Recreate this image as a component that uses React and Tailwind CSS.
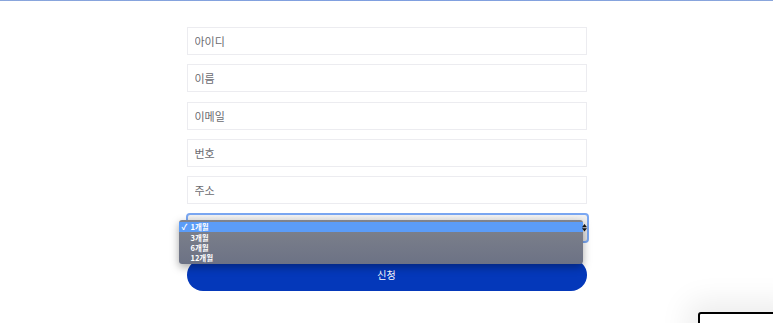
import React from 'react'

const FONT = { fontFamily: '"Noto Sans CJK KR", "Noto Sans", sans-serif' }

// ─── Plain text field ──────────────────────────────────────────────────────
function Field({ placeholder }) {
  return (
    <input
      type="text"
      placeholder={placeholder}
      className="h-[28px] w-[400px] border border-[#ececf0] bg-white px-[7px] text-[11px] text-[#333] placeholder:text-[#6b6b70] outline-none"
    />
  )
}

// ─── Open native-looking select menu ───────────────────────────────────────
function Menu() {
  const items = ['1개월', '3개월', '6개월', '12개월']
  return (
    <div className="absolute left-[-9px] top-[5px] z-10 w-[404px] overflow-hidden rounded-[3px] bg-gradient-to-b from-[#80838c] to-[#6c7285] py-[1.5px] shadow-[0_3px_8px_rgba(0,0,0,0.35)]">
      {items.map((it, i) => (
        <div
          key={it}
          className={`flex h-[10.2px] items-center text-[7.5px] font-bold leading-none text-white ${i === 0 ? 'bg-[#5b9cf8]' : ''}`}
        >
          <span className="w-[12px] pl-[3px] text-[8px]">{i === 0 ? '✓' : ''}</span>
          <span>{it}</span>
        </div>
      ))}
    </div>
  )
}

export default function App() {
  return (
    <div className="relative h-[323px] w-[773px] overflow-hidden bg-white" style={FONT}>
      <div className="h-[1px] w-full bg-gradient-to-r from-[#8aa6dc] via-[#7f9fe0] to-[#8aa6dc]" />

      <form className="mx-auto mt-[26px] flex w-[400px] flex-col gap-[9.3px]">
        <Field placeholder="아이디" />
        <Field placeholder="이름" />
        <Field placeholder="이메일" />
        <Field placeholder="번호" />
        <Field placeholder="주소" />

        <div className="relative ml-[-1px] h-[30px] w-[403px] rounded-[4px] border-2 border-[#7aa7f2] bg-gradient-to-b from-[#f2f2f2] to-[#e2e2e2]">
          <div className="absolute right-[0px] top-[8px] z-20 flex flex-col items-center leading-none text-black">
            <svg width="5" height="4.5" viewBox="0 0 6 5"><path d="M0 5 L3 1 L6 5 Z" fill="#111" /></svg>
            <svg width="5" height="4.5" viewBox="0 0 6 5"><path d="M0 0 L3 4 L6 0 Z" fill="#111" /></svg>
          </div>
          <Menu />
        </div>

        <button
          type="button"
          className="mt-[6px] h-[32px] w-[400px] rounded-full bg-[#0438ba] text-[10px] text-white"
        >
          신청
        </button>
      </form>

      <div className="absolute left-[698px] top-[312px] h-[30px] w-[90px] rounded-[3px] border-2 border-black bg-white shadow-[0_0_30px_10px_rgba(0,0,0,0.08)]" />
    </div>
  )
}
